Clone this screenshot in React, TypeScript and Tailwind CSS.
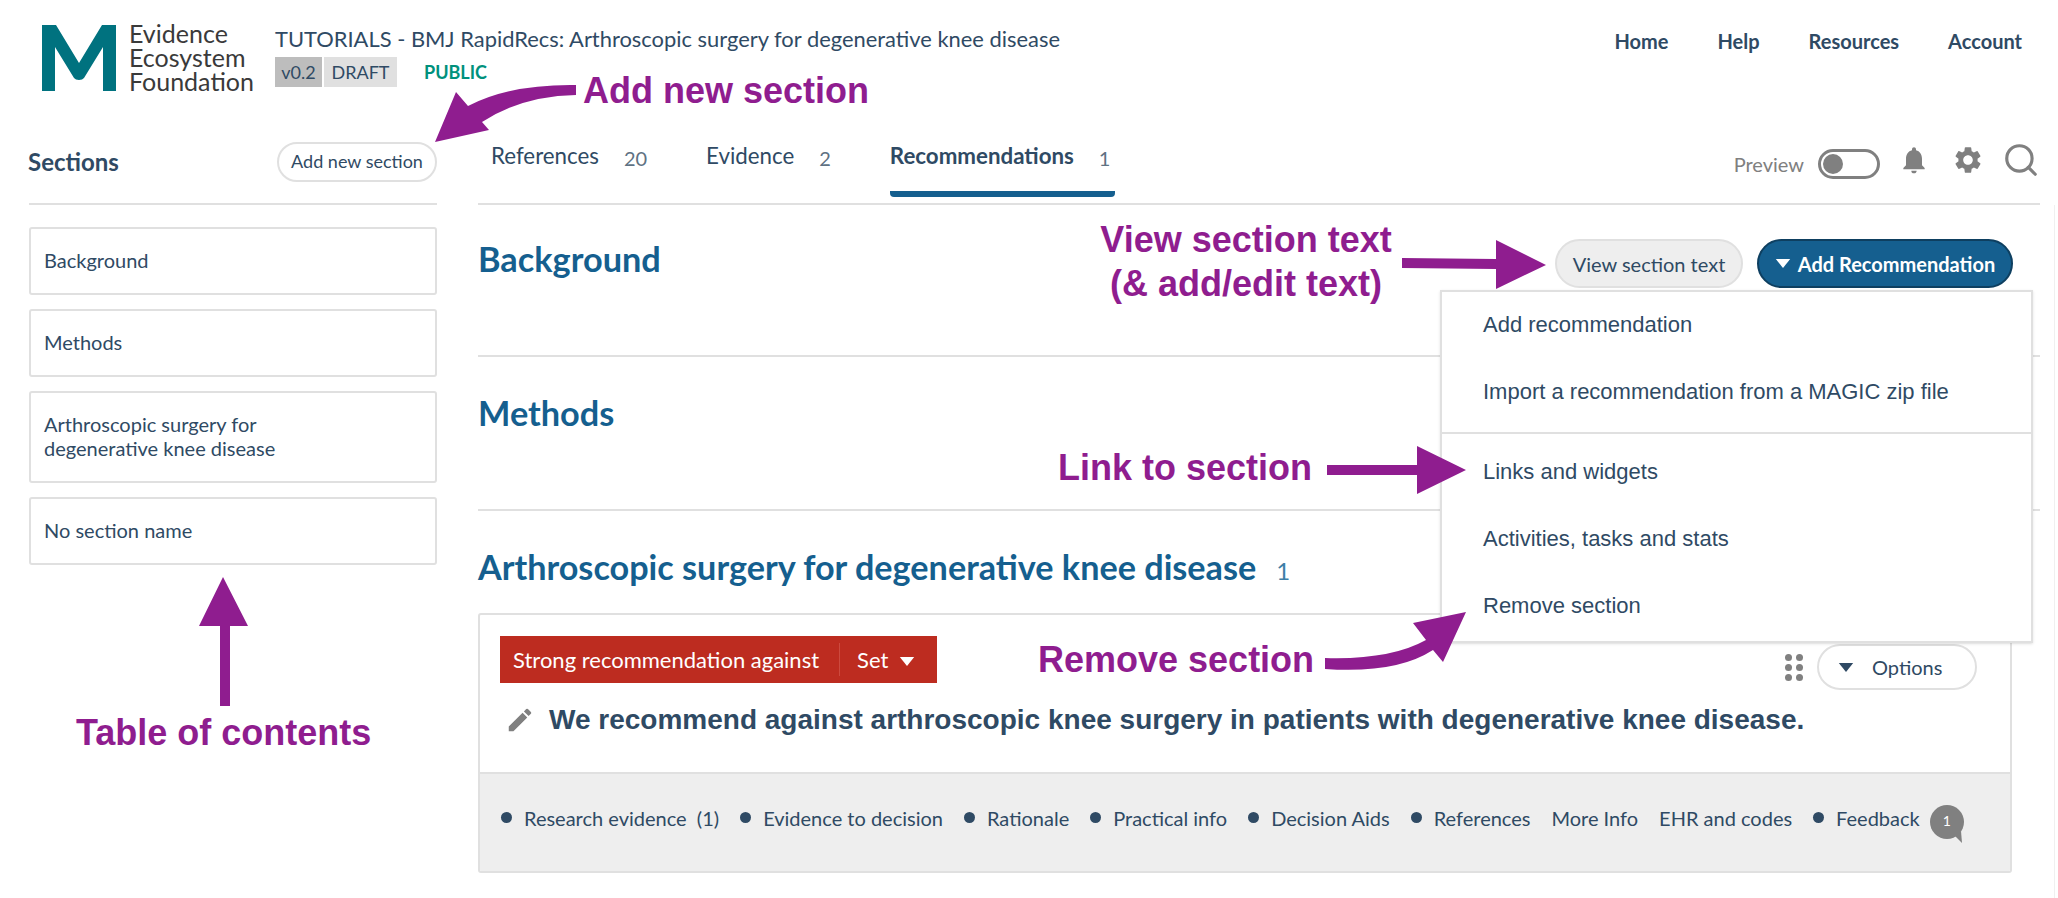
import { MdEdit, MdNotifications, MdSettings } from 'react-icons/md'
import { Search } from 'lucide-react'

const TABS = [
  { label: 'References', count: 20 },
  { label: 'Evidence', count: 2 },
  { label: 'Recommendations', count: 1, active: true },
]

const SECTIONS = ['Background', 'Methods', 'Arthroscopic surgery for degenerative knee disease', 'No section name']

const FOOTER_LINKS = [
  { label: 'Research evidence\u00a0 (1)', dot: true },
  { label: 'Evidence to decision', dot: true },
  { label: 'Rationale', dot: true },
  { label: 'Practical info', dot: true },
  { label: 'Decision Aids', dot: true },
  { label: 'References', dot: true },
  { label: 'More Info', dot: false },
  { label: 'EHR and codes', dot: false },
  { label: 'Feedback', dot: true },
]

function Caret({ className }: { className: string }) {
  return (
    <svg viewBox="0 0 16 10" className={className} fill="currentColor">
      <path d="M0 0h16L8 10z" />
    </svg>
  )
}

function Header() {
  return (
    <header className="flex h-[120px] shrink-0 items-start pl-[42px] pr-[36px]">
      <svg viewBox="0 0 74 66" className="mt-[25px] h-[66px] w-[74px] text-[#00727f]" fill="currentColor">
        <path d="M0 0h14l23 38L60 0h14v66H61V22L42 53q-1.500 2-5 2t-5-2L13 22v44H0z" />
      </svg>
      <div className="ml-[13px] mt-[21px] w-[133px] text-[25px] leading-[24px] text-[#3a3a3a]">
        <div>Evidence</div>
        <div>Ecosystem</div>
        <div>Foundation</div>
      </div>
      <div className="ml-[13px] mt-[24px]">
        <div className="text-[21.900px] leading-[30px] text-[#2f4a64]">
          TUTORIALS - BMJ RapidRecs: Arthroscopic surgery for degenerative knee disease
        </div>
        <div className="mt-[3px] flex items-center text-[18px]">
          <span className="flex h-[30px] w-[47px] items-center justify-center bg-[#bdbdbd] text-[#2f4a64]">v0.2</span>
          <span className="ml-[2px] flex h-[30px] w-[73px] items-center justify-center bg-[#e0e0e0] text-[#2f4a64]">DRAFT</span>
          <span className="ml-[27px] font-bold text-[#00917c]">PUBLIC</span>
        </div>
      </div>
      <nav className="ml-auto mt-[27px] flex gap-[49px] text-[20px] font-bold leading-[28px] text-[#2f4a64]">
        <a>Home</a>
        <a>Help</a>
        <a>Resources</a>
        <a>Account</a>
      </nav>
    </header>
  )
}

function Sidebar() {
  return (
    <aside className="ml-[29px] w-[408px] shrink-0">
      <div className="flex h-[85px] items-center justify-between border-b-2 border-[#e0e0e0]">
        <h2 className="-ml-px text-[24px] font-bold text-[#2f4a64]">Sections</h2>
        <button className="h-[40px] w-[160px] rounded-full border-2 border-[#e0e0e0] bg-white text-[18px] text-[#2f4a64]">
          Add new section
        </button>
      </div>
      <div className="mt-[22px] flex flex-col gap-[14px]">
        {SECTIONS.map(name => (
          <div
            key={name}
            className={`flex items-center rounded-[3px] border-2 border-[#e0e0e0] pb-[2px] pl-[13px] pr-[120px] text-[20px] leading-[24px] text-[#2f4a64] ${
              name.length > 20 ? 'h-[92px]' : 'h-[68px]'
            }`}
          >
            {name}
          </div>
        ))}
      </div>
    </aside>
  )
}

function Tabs() {
  return (
    <div className="flex h-[85px] items-start border-b-2 border-[#e0e0e0]">
      <div className="flex gap-[59px] pl-[13px]">
        {TABS.map(tab => (
          <div
            key={tab.label}
            className={`flex h-[77px] items-start pt-[20px] pb-[6px] text-[22.300px] leading-[32px] text-[#2f4a64] ${
              tab.active ? 'w-[225px] rounded-b-sm border-b-[6px] border-[#155f8f] font-bold' : ''
            }`}
          >
            {tab.label}
            <span className={`mt-[2px] text-[20px] font-normal text-[#5f7283] ${tab.active ? 'ml-[25px]' : 'ml-[25px]'}`}>
              {tab.count}
            </span>
          </div>
        ))}
      </div>
      <div className="ml-auto mt-[29px] flex items-center text-[#808080]">
        <span className="text-[20px]">Preview</span>
        <span className="ml-[14px] flex h-[30px] w-[62px] items-center rounded-full border-[3px] border-[#808080] pl-[2px]">
          <span className="h-[20px] w-[20px] rounded-full bg-[#808080]" />
        </span>
        <MdNotifications className="-mt-[8px] ml-[18px] h-[32px] w-[32px]" />
        <MdSettings className="-mt-[8px] ml-[22px] h-[32px] w-[32px]" />
        <Search className="-mt-[8px] ml-[18px] h-[38px] w-[38px]" strokeWidth={2} />
      </div>
    </div>
  )
}

function Dropdown() {
  return (
    <div className="absolute right-[7px] top-[170px] z-10 w-[593px] border-2 border-[#e0e0e0] bg-white text-[22px] leading-[28px] text-[#2f4a64] font-['Liberation_Sans',sans-serif] shadow-sm">
      <div className="flex h-[140px] flex-col gap-[39px] pl-[41px] pt-[19px]">
        <div>Add recommendation</div>
        <div>Import a recommendation from a MAGIC zip file</div>
      </div>
      <div className="flex h-[209px] flex-col gap-[39px] border-t-2 border-[#e0e0e0] pl-[41px] pt-[24px]">
        <div>Links and widgets</div>
        <div>Activities, tasks and stats</div>
        <div>Remove section</div>
      </div>
    </div>
  )
}

function RecommendationCard() {
  return (
    <div className="mr-[28px] mt-[25px] h-[260px] overflow-hidden rounded-[3px] border-2 border-[#e0e0e0]">
      <div className="h-[157px] pl-[20px] pr-[33px] pt-[21px]">
        <div className="flex items-start justify-between">
          <div className="flex h-[47px] w-[437px] items-center bg-[#bd2c20] pl-[13px] text-[22px] text-white">
            Strong recommendation against
            <span className="ml-[20px] border-l border-[#cc4a3f] pl-[17px]">Set</span>
            <Caret className="ml-[11px] mt-[3px] h-[9px] w-[16px]" />
          </div>
          <div className="mt-[8px] flex items-center">
            <div className="mr-[14px] grid grid-cols-2 gap-x-[4px] gap-y-[3px]">
              {[0, 1, 2, 3, 4, 5].map(i => (
                <span key={i} className="h-[7px] w-[7px] rounded-full bg-[#808080]" />
              ))}
            </div>
            <button className="flex h-[46px] w-[160px] items-center rounded-full border-2 border-[#e0e0e0] bg-white pl-[19px] text-[20px] text-[#2f4a64]">
              <Caret className="h-[9px] w-[16px]" />
              <span className="ml-[18px]">Options</span>
            </button>
          </div>
        </div>
        <div className="mt-[13px] flex items-center">
          <MdEdit className="ml-[5px] h-[30px] w-[30px] text-[#808080]" />
          <p className="ml-[14px] text-[28px] font-bold leading-[34px] text-[#2f4a64] font-['Liberation_Sans',sans-serif]">
            We recommend against arthroscopic knee surgery in patients with degenerative knee disease.
          </p>
        </div>
      </div>
      <div className="flex h-[99px] items-center gap-[21px] border-t-2 border-[#e0e0e0] bg-[#eeeeee] pb-[10px] pl-[21px] text-[20px] text-[#2f4a64]">
        {FOOTER_LINKS.map(link => (
          <div key={link.label} className="flex items-center">
            {link.dot && <span className="mr-[12px] h-[11px] w-[11px] rounded-full bg-[#2f4a64]" />}
            {link.label}
          </div>
        ))}
        <div className="relative -ml-[13px] mt-[13px] h-[38px] w-[38px]">
          <svg viewBox="0 0 38 38" className="h-full w-full" fill="#808080">
            <circle cx="19" cy="17" r="17" />
            <path d="M26 30l8 8-1-12z" />
          </svg>
          <span className="absolute left-0 top-[4px] w-[38px] text-center text-[14px] leading-[24px] text-white">1</span>
        </div>
      </div>
    </div>
  )
}

function Main() {
  return (
    <main className="relative ml-[41px] w-[1562px]">
      <Tabs />
      <section className="flex h-[152px] items-start justify-between border-b-2 border-[#e0e0e0] pr-[27px] pt-[34px]">
        <h1 className="-mt-px text-[34.300px] font-bold leading-[42px] text-[#155f8f]">Background</h1>
        <div className="flex gap-[14px]">
          <button className="h-[49px] w-[188px] rounded-full border-2 border-[#e0e0e0] bg-[#eeeeee] text-[20px] text-[#2f4a64]">
            View section text
          </button>
          <button className="flex h-[49px] w-[256px] items-center justify-center rounded-full border-2 border-[#0e3f60] bg-[#155f8f] text-[20px] font-bold text-white">
            <Caret className="mr-[7px] h-[9px] w-[16px]" />
            Add Recommendation
          </button>
        </div>
      </section>
      <section className="h-[154px] border-b-2 border-[#e0e0e0] pt-[35px]">
        <h1 className="text-[34.300px] font-bold leading-[42px] text-[#155f8f]">Methods</h1>
      </section>
      <section className="pt-[35px]">
        <h1 className="flex items-baseline text-[34.200px] font-bold leading-[42px] text-[#155f8f]">
          Arthroscopic surgery for degenerative knee disease
          <span className="ml-[20px] text-[24px] font-normal leading-none text-[#3d7ea6]">1</span>
        </h1>
        <RecommendationCard />
      </section>
      <Dropdown />
    </main>
  )
}

// purple call-outs drawn over the page
function Annotations() {
  const label = "absolute z-20 whitespace-nowrap text-[36px] font-bold leading-[40px] text-[#8f1d8f] font-['Liberation_Sans',sans-serif]"
  return (
    <>
      <span className={`${label} left-[583px] top-[71px]`}>Add new section</span>
      <span className={`${label} left-[1100px] top-[220px] w-[292px] text-center`}>View section text</span>
      <span className={`${label} left-[1100px] top-[264px] w-[292px] text-center`}>(&amp; add/edit text)</span>
      <span className={`${label} left-[1058px] top-[448px]`}>Link to section</span>
      <span className={`${label} left-[1038px] top-[640px]`}>Remove section</span>
      <span className={`${label} left-[76px] top-[713px]`}>Table of contents</span>
      <svg className="pointer-events-none absolute left-0 top-0 z-20 h-[898px] w-[2058px]" viewBox="0 0 2058 898" fill="#8f1d8f">
        <path d="M435 142 456 92 468 106Q510 84 576 85V95Q522 96 482 122L489 130Z" />
        <path d="M1402 258 1496 259V240L1546 265 1496 289V269L1402 268Z" />
        <path d="M1327 465H1417V446L1466 470 1417 494V475H1327Z" />
        <path d="M1466 612 1413 623 1426 640Q1390 660 1325 658V669Q1396 674 1433 650L1443 662Z" />
        <path d="M223 577 248 626H230V706H220V626H199Z" />
      </svg>
    </>
  )
}

export default function App() {
  return (
    <div className="relative h-[898px] w-[2058px] overflow-hidden bg-white font-[Lato,sans-serif]">
      <Header />
      <div className="flex">
        <Sidebar />
        <Main />
        <div className="ml-[14px] mt-[85px] h-[700px] w-px bg-[#f0f0f0]" />
      </div>
      <Annotations />
    </div>
  )
}
